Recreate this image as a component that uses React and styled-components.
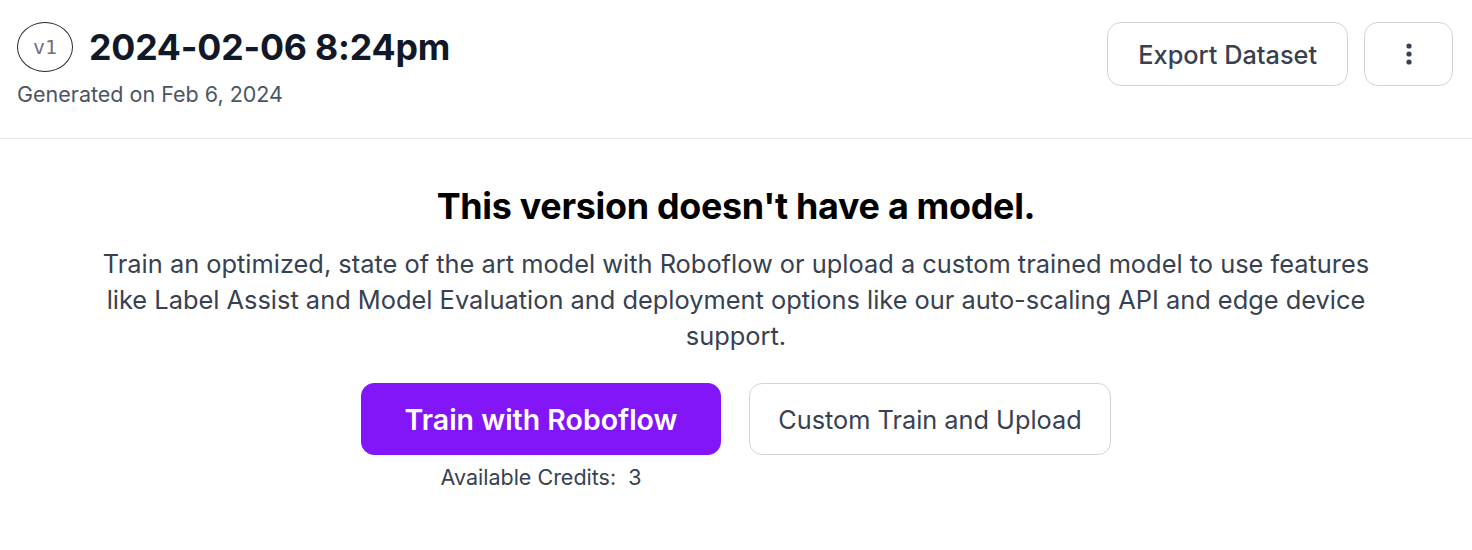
import styled, { createGlobalStyle } from 'styled-components'

const GlobalStyle = createGlobalStyle`
  body {
    margin: 0;
    background: #fff;
    font-family: Inter, "Noto Sans", sans-serif;
  }
`

const Header = styled.header`
  display: flex;
  justify-content: space-between;
  align-items: flex-start;
  padding: 22px 19px 0 17px;
  height: 116px;
  border-bottom: 1px solid #e5e7eb;
`

const TitleBlock = styled.div`
  display: flex;
  flex-direction: column;
`

const TitleRow = styled.div`
  display: flex;
  align-items: center;
  gap: 16px;
`

const VersionBadge = styled.span`
  display: grid;
  place-items: center;
  width: 54px;
  height: 48px;
  border: 1px solid #1f2937;
  border-radius: 50%;
  color: #6b7280;
  font-family: "DejaVu Sans Mono", monospace;
  font-size: 20px;
`

const Title = styled.h1`
  margin: 0;
  font-size: 35.7px;
  font-weight: 700;
  color: #111827;
  letter-spacing: -0.2px;
`

const Generated = styled.p`
  margin: 9px 0 0;
  font-size: 21.5px;
  color: #4b5563;
`

const Actions = styled.div`
  display: flex;
  gap: 16px;
`

const OutlineButton = styled.button`
  display: grid;
  place-items: center;
  height: 64px;
  padding: 0 ${(p) => (p.$icon ? '0' : '30px')};
  width: ${(p) => (p.$icon ? '89px' : 'auto')};
  background: #fff;
  border: 1px solid #d1d5db;
  border-radius: 14px;
  color: #374151;
  font-family: inherit;
  font-size: 25.3px;
  font-weight: 500;
`

const Body = styled.main`
  display: flex;
  flex-direction: column;
  align-items: center;
  padding-top: 45px;
  text-align: center;
`

const Heading = styled.h2`
  margin: 0;
  font-size: 35.9px;
  font-weight: 700;
  color: #000;
  letter-spacing: -0.3px;
`

const Description = styled.p`
  margin: 18px 0 0;
  max-width: 1275px;
  font-size: 25.4px;
  line-height: 36px;
  color: #374151;
`

const ButtonRow = styled.div`
  display: flex;
  gap: 28px;
  margin-top: 29px;
`

const Column = styled.div`
  display: flex;
  flex-direction: column;
  align-items: center;
`

const BigButton = styled.button`
  width: ${(p) => p.$width}px;
  height: 72px;
  border-radius: 13px;
  font-family: inherit;
  font-size: ${(p) => (p.$primary ? '28.5px' : '25.3px')};
  font-weight: ${(p) => (p.$primary ? 600 : 400)};
  color: ${(p) => (p.$primary ? '#fff' : '#374151')};
  background: ${(p) => (p.$primary ? '#8315f9' : '#fff')};
  border: 1px solid ${(p) => (p.$primary ? '#8315f9' : '#d1d5db')};
`

const Credits = styled.span`
  margin-top: 9px;
  font-size: 21.5px;
  color: #374151;
`

const CreditCount = styled.span`
  margin-left: 12px;
`

function DotsIcon() {
  return (
    <svg width="6" height="22" viewBox="0 0 6 22">
      <circle cx="3" cy="3" r="2.6" fill="#374151" />
      <circle cx="3" cy="11" r="2.6" fill="#374151" />
      <circle cx="3" cy="19" r="2.6" fill="#374151" />
    </svg>
  )
}

export default function App() {
  return (
    <>
      <GlobalStyle />
      <Header>
        <TitleBlock>
          <TitleRow>
            <VersionBadge>v1</VersionBadge>
            <Title>2024-02-06 8:24pm</Title>
          </TitleRow>
          <Generated>Generated on Feb 6, 2024</Generated>
        </TitleBlock>
        <Actions>
          <OutlineButton>Export Dataset</OutlineButton>
          <OutlineButton $icon aria-label="More">
            <DotsIcon />
          </OutlineButton>
        </Actions>
      </Header>
      <Body>
        <Heading>This version doesn't have a model.</Heading>
        <Description>
          Train an optimized, state of the art model with Roboflow or upload a custom trained
          model to use features like Label Assist and Model Evaluation and deployment options
          like our auto-scaling API and edge device support.
        </Description>
        <ButtonRow>
          <Column>
            <BigButton $primary $width={360}>Train with Roboflow</BigButton>
            <Credits>
              Available Credits:<CreditCount>3</CreditCount>
            </Credits>
          </Column>
          <Column>
            <BigButton $width={362}>Custom Train and Upload</BigButton>
          </Column>
        </ButtonRow>
      </Body>
    </>
  )
}
